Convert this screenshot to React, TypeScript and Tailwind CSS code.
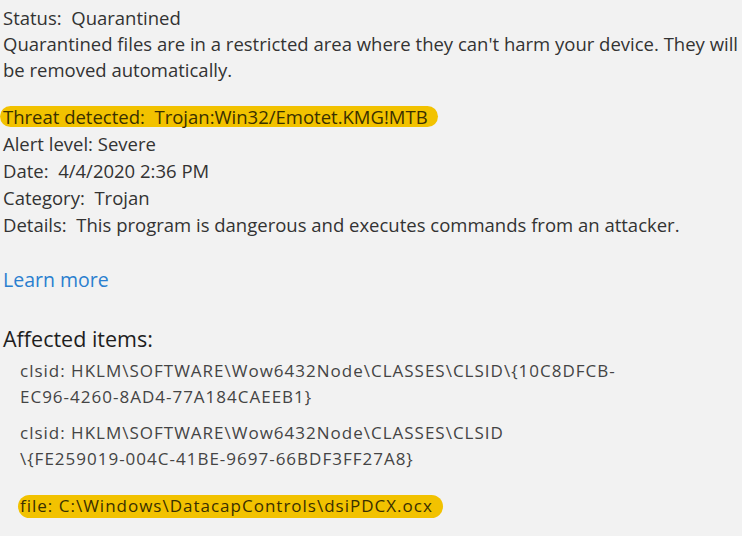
import React from "react";

export default function App() {
  return (
    <div className="w-[742px] h-[536px] overflow-hidden bg-[#f2f2f2] text-[#333333] [font-family:'Open_Sans','Noto_Sans',sans-serif]">
      <div className="flex flex-col pt-[5px] text-[18.5px] leading-[26px]">
        <div className="pl-[3px] whitespace-pre">Status:  Quarantined</div>
        <div className="pl-[3px] whitespace-nowrap">
          Quarantined files are in a restricted area where they can't harm your device. They will
        </div>
        <div className="pl-[3px] whitespace-nowrap">be removed automatically.</div>

        <div className="mt-[20px] h-[27px] flex items-center">
          <span className="h-[21px] flex items-center rounded-full bg-[#f2c200] pl-[3px] pr-[10px] text-[#3a3000] whitespace-pre">
            Threat detected:  Trojan:Win32/Emotet.KMG!MTB
          </span>
        </div>
        <div className="pl-[3px] leading-[27px]">Alert level: Severe</div>
        <div className="pl-[3px] leading-[27px] whitespace-pre">Date:  4/4/2020 2:36 PM</div>
        <div className="pl-[3px] leading-[27px] whitespace-pre">Category:  Trojan</div>
        <div className="pl-[3px] leading-[27px] whitespace-pre">
          Details:  This program is dangerous and executes commands from an attacker.
        </div>

        <div className="mt-[28px] pl-[3px] leading-[27px] text-[19.5px] text-[#2a7fcf]">Learn more</div>

        <div className="mt-[31px] pl-[3px] leading-[30px] text-[21.5px] text-[#1e1e1e]">Affected items:</div>

        <div className="mt-[4px] pl-[20px] text-[17px] tracking-[1px] leading-[26px] text-[#444444]">
          <div className="whitespace-nowrap">clsid: HKLM\SOFTWARE\Wow6432Node\CLASSES\CLSID\{"{"}10C8DFCB-</div>
          <div className="whitespace-nowrap">EC96-4260-8AD4-77A184CAEEB1{"}"}</div>
        </div>
        <div className="mt-[10px] pl-[20px] text-[17px] tracking-[1px] leading-[26px] text-[#444444]">
          <div className="whitespace-nowrap">clsid: HKLM\SOFTWARE\Wow6432Node\CLASSES\CLSID</div>
          <div className="whitespace-nowrap">\{"{"}FE259019-004C-41BE-9697-66BDF3FF27A8{"}"}</div>
        </div>

        <div className="mt-[21px] pl-[18px] h-[26px] flex items-center">
          <span className="h-[23px] flex items-center rounded-full bg-[#f2c200] pl-[2px] pr-[10px] text-[17px] tracking-[1px] text-[#3a3000] whitespace-nowrap">
            file: C:\Windows\DatacapControls\dsiPDCX.ocx
          </span>
        </div>
      </div>
    </div>
  );
}
